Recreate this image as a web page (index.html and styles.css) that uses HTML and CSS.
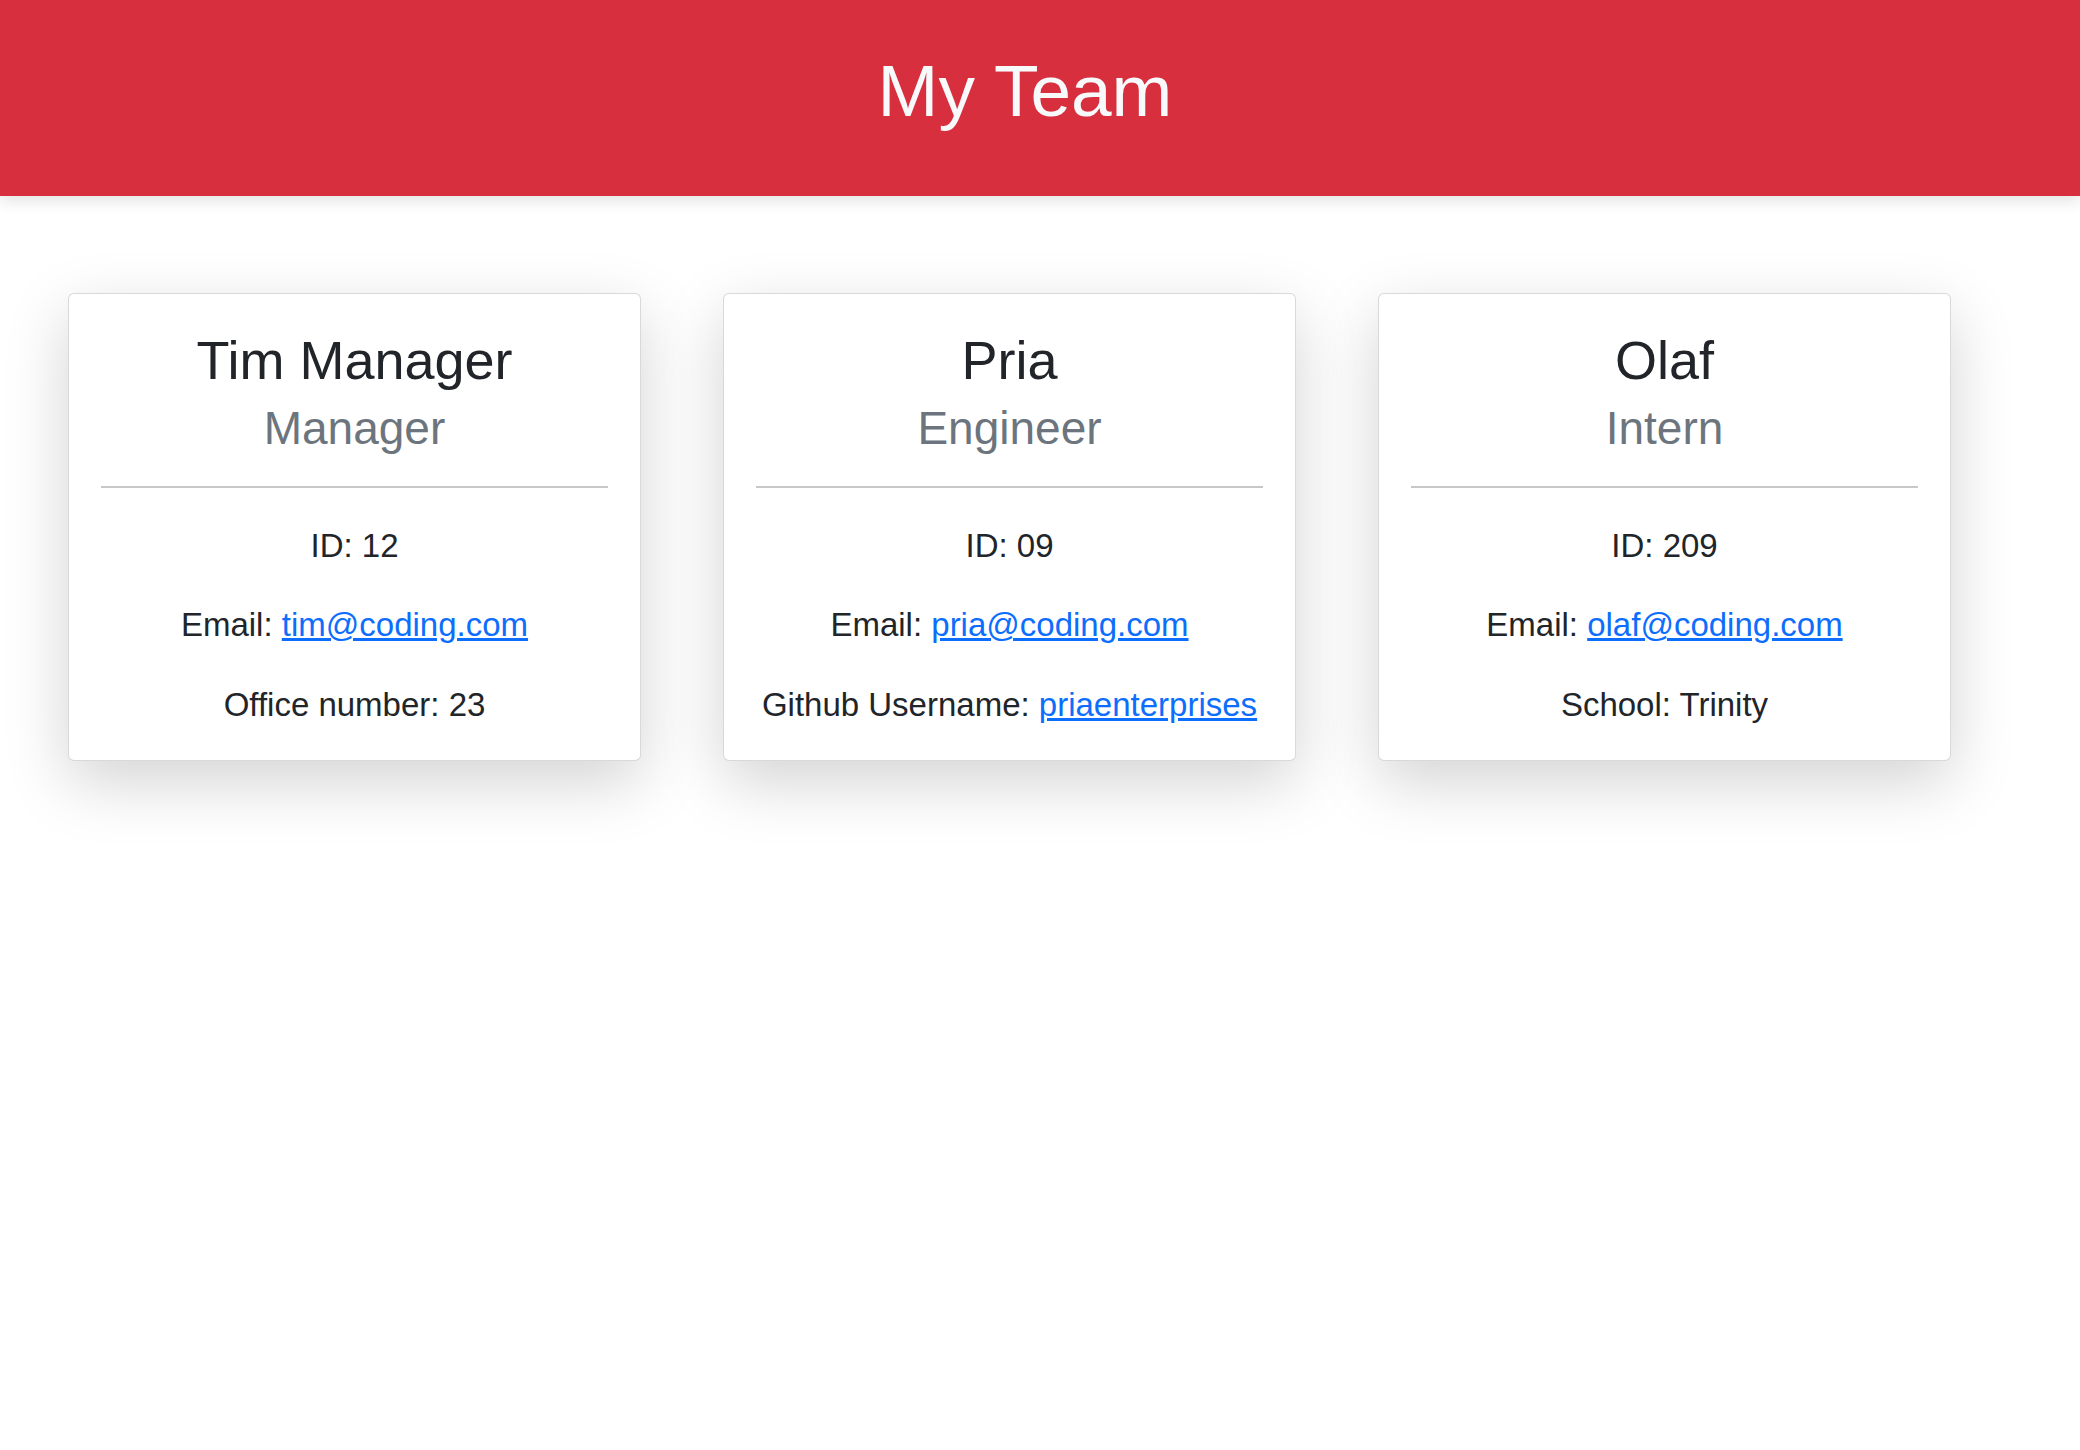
FILE: index.html
```html
<!DOCTYPE html>
<html lang="en">
<head>
<meta charset="utf-8">
<title>My Team</title>
<link rel="stylesheet" href="styles.css">
</head>
<body>
<header class="banner">
  <h1 class="banner-title">My Team</h1>
</header>
<main class="team">
  <section class="card">
    <div class="card-head">
      <h2 class="card-name">Tim Manager</h2>
      <h3 class="card-role">Manager</h3>
    </div>
    <hr class="card-rule">
    <div class="card-info">
      <p class="info-line">ID: 12</p>
      <p class="info-line">Email: <a class="info-link" href="#">tim@coding.com</a></p>
      <p class="info-line">Office number: 23</p>
    </div>
  </section>
  <section class="card">
    <div class="card-head">
      <h2 class="card-name">Pria</h2>
      <h3 class="card-role">Engineer</h3>
    </div>
    <hr class="card-rule">
    <div class="card-info">
      <p class="info-line">ID: 09</p>
      <p class="info-line">Email: <a class="info-link" href="#">pria@coding.com</a></p>
      <p class="info-line">Github Username: <a class="info-link" href="#">priaenterprises</a></p>
    </div>
  </section>
  <section class="card">
    <div class="card-head">
      <h2 class="card-name">Olaf</h2>
      <h3 class="card-role">Intern</h3>
    </div>
    <hr class="card-rule">
    <div class="card-info">
      <p class="info-line">ID: 209</p>
      <p class="info-line">Email: <a class="info-link" href="#">olaf@coding.com</a></p>
      <p class="info-line">School: Trinity</p>
    </div>
  </section>
</main>
</body>
</html>
```
FILE: styles.css
```css
* { box-sizing: border-box; }
html, body {
  margin: 0;
  padding: 0;
  background: #ffffff;
  font-family: "Liberation Sans", Arial, sans-serif;
  color: #212529;
}
body {
  min-height: 100vh;
}
.banner {
  height: 196px;
  padding: 47px 30px 0 0;
  background: #d72f3e;
  box-shadow: 0 6px 14px rgba(0, 0, 0, 0.1);
  text-align: center;
  position: relative;
}
.banner-title {
  margin: 0;
  font-size: 73px;
  line-height: 1.2;
  font-weight: 400;
  color: #f8f9fa;
}
.team {
  display: flex;
  align-items: flex-start;
  gap: 82px;
  padding: 97px 0 160px 68px;
}
.card {
  width: 573px;
  border: 1px solid rgba(0, 0, 0, 0.15);
  border-radius: 6px;
  background: #fff;
  box-shadow: 0 21px 64px rgba(0, 0, 0, 0.175);
  padding: 34px 32px 31px;
  text-align: center;
  display: flex;
  flex-direction: column;
}
.card-head {
  display: flex;
  flex-direction: column;
  gap: 8.5px;
}
.card-name {
  margin: 0;
  font-size: 54px;
  line-height: 1.2;
  font-weight: 400;
  color: #212529;
}
.card-role {
  margin: 0;
  font-size: 46px;
  line-height: 1.2;
  font-weight: 400;
  color: #6c757d;
}
.card-rule {
  margin: 30px 0 0;
  border: 0;
  height: 2px;
  background: #c8c8c8;
}
.card-info {
  display: flex;
  flex-direction: column;
  gap: 31.5px;
  margin-top: 33.4px;
}
.info-line {
  margin: 0;
  font-size: 33px;
  line-height: 48px;
  color: #212529;
  white-space: nowrap;
}
.info-link {
  color: #0d6efd;
  text-decoration: underline;
}
```
